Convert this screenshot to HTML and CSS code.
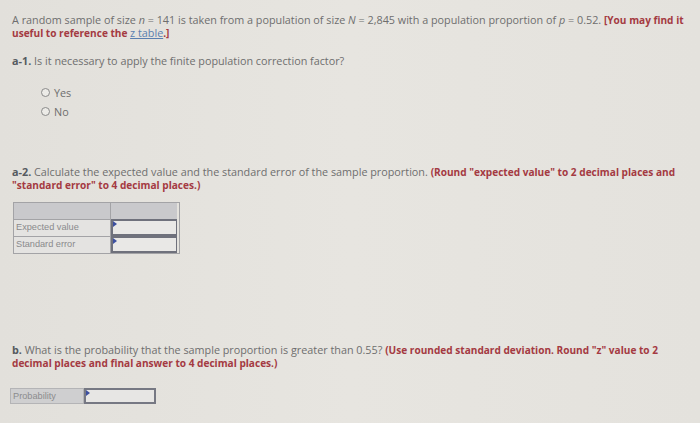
FILE: index.html
```html
<!DOCTYPE html>
<html>
<head>
<meta charset="utf-8">
<link rel="stylesheet" href="styles.css">
</head>
<body>
<div class="page">
  <p class="intro">A random sample of size <i>n</i> = 141 is taken from a population of size <i>N</i> = 2,845 with a population proportion of <i>p</i> = 0.52. <b class="red">[You may find it</b><br><b class="red">useful to reference the </b><a class="link">z table</a><b class="red">.]</b></p>

  <p class="q1"><b class="qn">a-1.</b> Is it necessary to apply the finite population correction factor?</p>

  <div class="radios">
    <label class="radio"><span class="circle"></span>Yes</label>
    <label class="radio"><span class="circle"></span>No</label>
  </div>

  <p class="q2"><b class="qn">a-2.</b> Calculate the expected value and the standard error of the sample proportion. <b class="red">(Round "expected value" to 2 decimal places and</b><br><b class="red">"standard error" to 4 decimal places.)</b></p>

  <div class="table">
    <div class="hcell"></div><div class="hcell hcell2"></div>
    <div class="lcell">Expected value</div><div class="icell"><span class="tri"></span></div>
    <div class="lcell">Standard error</div><div class="icell"><span class="tri"></span></div>
  </div>

  <p class="q3"><b class="qn">b.</b> What is the probability that the sample proportion is greater than 0.55? <b class="red">(Use rounded standard deviation. Round "z" value to 2</b><br><b class="red">decimal places and final answer to 4 decimal places.)</b></p>

  <div class="prob">
    <div class="plabel">Probability</div><div class="pinput"><span class="tri"></span></div>
  </div>
</div>
</body>
</html>
```

FILE: styles.css
```css
html, body {
  margin: 0;
  padding: 0;
}
body {
  width: 700px;
  height: 423px;
  overflow: hidden;
  background: linear-gradient(90deg, #e2e0db 0%, #e7e5e0 50%, #e4e2dd 100%);
  font-family: "Open Sans", "Lato", sans-serif;
  color: #6e6e6e;
  font-size: 10.8px;
  line-height: 13px;
}
.page {
  padding: 13px 12px 0 12px;
}
p { margin: 0; white-space: nowrap; }
i { font-style: italic; }
.red {
  color: #a43a42;
  font-weight: 700;
  font-family: "Open Sans", sans-serif;
  font-size: 10.1px;
  line-height: 1;
}
.qn {
  color: #555a60;
  font-weight: 700;
  line-height: 1;
}
.link {
  color: #5a7fb0;
  text-decoration: underline;
}
.q1 { margin-top: 15px; }
.radios {
  margin-top: 19px;
  padding-left: 29px;
  display: flex;
  flex-direction: column;
  gap: 6px;
}
.radio {
  display: flex;
  align-items: center;
  gap: 4px;
  height: 13px;
}
.circle {
  width: 7px;
  height: 7px;
  border: 1px solid #8a8a8a;
  border-radius: 50%;
  background: #ecebe7;
}
.q2 { margin-top: 47px; }
.table {
  margin-top: 11px;
  margin-left: 1px;
  display: grid;
  grid-template-columns: 97px 66px;
  grid-template-rows: 16px 17px 17px;
  width: 165px;
  border: 1px solid #a3a3a6;
  box-sizing: content-box;
  font-family: "Liberation Sans", Arial, sans-serif;
  font-size: 9.2px;
  color: #8a8a8c;
}
.hcell { background: #c9c9cc; border-right: 1px solid #a3a3a6; }
.hcell2 { border-right: 0; }
.lcell {
  border-top: 1px solid #a3a3a6;
  border-right: 1px solid #a3a3a6;
  padding-left: 2px;
  line-height: 15px;
  background: #e4e3e1;
}
.icell {
  position: relative;
  border: 2px solid #6f717c;
  border-right-width: 1px;
  background: #e9e8e6;
}
.tri {
  position: absolute;
  left: 0;
  top: 0;
  width: 0;
  height: 0;
  border-top: 3px solid transparent;
  border-bottom: 3px solid transparent;
  border-left: 4px solid #3c4fa0;
}
.q3 { margin-top: 89px; }
.prob {
  margin-top: 19px;
  margin-left: -2px;
  display: flex;
  height: 16px;
  font-family: "Liberation Sans", Arial, sans-serif;
  font-size: 9.2px;
  color: #8c8c8e;
}
.plabel {
  width: 70px;
  background: #cfcfd0;
  border: 1px solid #b4b4b6;
  padding-left: 2px;
  line-height: 14px;
}
.pinput {
  position: relative;
  width: 68px;
  border: 2px solid #767883;
  background: #e7e6e4;
}
```
